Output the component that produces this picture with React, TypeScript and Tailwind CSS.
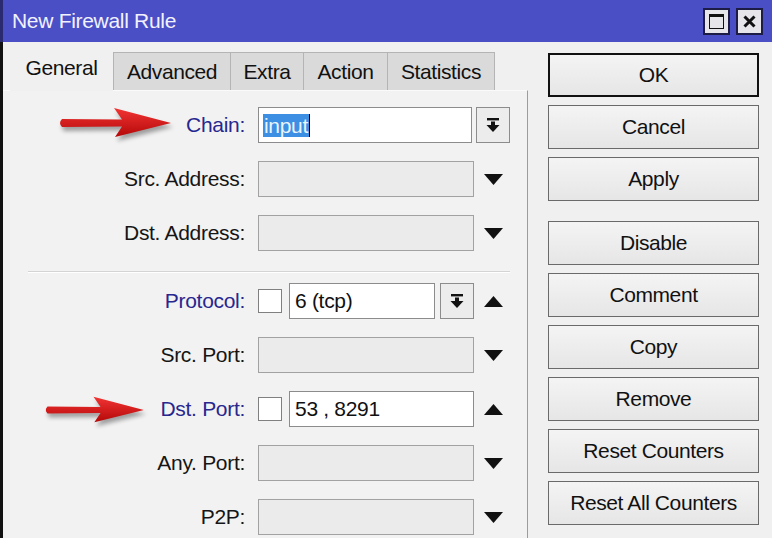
const font = "font-['Liberation_Sans',Arial,sans-serif]";

const DropIcon = () => (
  <svg width="14" height="16" viewBox="0 0 14 16">
    <rect x="1" y="1" width="12" height="2.4" fill="#111" />
    <rect x="5" y="4.5" width="4" height="4" fill="#111" />
    <polygon points="0.5,8 13.5,8 7,15" fill="#111" />
  </svg>
);

const Tri = ({ up }: { up?: boolean }) => (
  <svg width="19" height="11" viewBox="0 0 19 11" className="shrink-0">
    {up ? <polygon points="0,11 19,11 9.5,0" fill="#111" /> : <polygon points="0,0 19,0 9.5,11" fill="#111" />}
  </svg>
);

const Field = ({ w, value, active }: { w: string; value?: string; active?: boolean }) => (
  <div
    className={`${w} h-[36px] shrink-0 flex items-center pl-[5px] text-[21px] tracking-[-0.3px] text-[#111] border ${
      active ? 'bg-white border-[#8c8c8c]' : 'bg-[#ebebeb] border-[#a2a2a2]'
    }`}
  >
    {value}
  </div>
);

const DropBtn = () => (
  <div className="w-[34px] h-[36px] shrink-0 flex items-center justify-center bg-[#ececec] border border-[#8c8c8c]">
    <DropIcon />
  </div>
);

const Check = () => <div className="w-[24px] h-[24px] shrink-0 bg-white border border-[#808080]" />;

const Label = ({ text, blue }: { text: string; blue?: boolean }) => (
  <div className={`w-[243px] shrink-0 text-right pr-[1px] text-[21px] tracking-[-0.3px] ${blue ? 'text-[#27278f]' : 'text-[#151515]'}`}>
    {text}
  </div>
);

const Row = ({ children }: { children: React.ReactNode }) => (
  <div className="h-[36px] flex items-center">{children}</div>
);

const Arrow = ({ className }: { className: string }) => (
  <svg width="120" height="34" viewBox="0 0 120 34" className={`absolute drop-shadow-[2px_4px_2px_rgba(0,0,0,0.35)] ${className}`}>
    <defs>
      <linearGradient id="ar" x1="0" y1="0" x2="0" y2="1">
        <stop offset="0" stopColor="#f23434" />
        <stop offset="1" stopColor="#b40808" />
      </linearGradient>
    </defs>
    <path d="M4 13 Q0 17 4 21 L64 20.5 L57 31 L113 17 L56 2 L64 13.5 Z" fill="url(#ar)" />
  </svg>
);

export default function App() {
  const buttons = ['OK', 'Cancel', 'Apply', 'Disable', 'Comment', 'Copy', 'Remove', 'Reset Counters', 'Reset All Counters'];

  return (
    <div className={`relative w-[772px] h-[538px] overflow-hidden bg-[#f0f0f0] flex flex-col ${font}`}>
      {/* title bar */}
      <div className="h-[42px] shrink-0 bg-[#4b4fc6] flex items-center pl-[12px] pr-[9px] border-l-[3px] border-[#2a2a70]">
        <span className="text-[21px] text-[#f2f2ff] tracking-[-0.3px] -ml-[3px] flex-1">New Firewall Rule</span>
        <div className="flex gap-[6px]">
          <div className="w-[27px] h-[27px] bg-[#e6e6ea] border-2 border-[#1c1c44] flex items-center justify-center">
            <div className="w-[15px] h-[15px] border-[1.5px] border-t-[3px] border-[#111]" />
          </div>
          <div className="w-[27px] h-[27px] bg-[#e6e6ea] border-2 border-[#1c1c44] flex items-center justify-center">
            <svg width="13" height="13" viewBox="0 0 13 13">
              <path d="M1.5 1.5 L11.5 11.5 M11.5 1.5 L1.5 11.5" stroke="#111" strokeWidth="3" />
            </svg>
          </div>
        </div>
      </div>

      <div className="flex-1 flex border-l-[3px] border-[#111]">
        {/* left side: tabs + form */}
        <div className="w-[525px] shrink-0 flex flex-col">
          <div className="h-[48px] flex items-end pl-[7px] text-[21px] tracking-[-0.4px] text-[#111]">
            <div className="w-[103px] h-[42px] bg-[#f0f0f0] flex items-center justify-center pb-[4px] relative top-[1px]">General</div>
            <div className="w-[118px] h-[38px] bg-[#dadada] border border-b-0 border-[#b4b4b4] flex items-center justify-center">Advanced</div>
            <div className="w-[73px] h-[38px] bg-[#dadada] border border-b-0 border-l-0 border-[#b4b4b4] flex items-center justify-center">Extra</div>
            <div className="w-[84px] h-[38px] bg-[#dadada] border border-b-0 border-l-0 border-[#b4b4b4] flex items-center justify-center">Action</div>
            <div className="w-[107px] h-[38px] bg-[#dadada] border border-b-0 border-l-0 border-[#b4b4b4] flex items-center justify-center">Statistics</div>
          </div>

          <div className="flex-1 border-t border-r border-t-[#fafafa] border-r-[#9c9c9c] bg-[#f2f2f2] pt-[16px]">
            <div className="flex flex-col gap-[18px]">
              <Row>
                <Label text="Chain:" blue />
                <div className="ml-[12px] flex gap-[4px]">
                  <div className="w-[214px] h-[36px] bg-white border border-[#8c8c8c] flex items-center pl-[4px] text-[21px] tracking-[-0.3px]">
                    <span className="bg-[#3d8fe3] text-[#eaf4ff] leading-[23px] px-[1px]">input</span>
                    <span className="w-[1px] h-[23px] bg-black" />
                  </div>
                  <DropBtn />
                </div>
              </Row>
              <Row>
                <Label text="Src. Address:" />
                <div className="ml-[12px] flex items-center gap-[10px]">
                  <Field w="w-[216px]" />
                  <Tri />
                </div>
              </Row>
              <Row>
                <Label text="Dst. Address:" />
                <div className="ml-[12px] flex items-center gap-[10px]">
                  <Field w="w-[216px]" />
                  <Tri />
                </div>
              </Row>
            </div>

            <div className="ml-[25px] w-[482px] mt-[20px] mb-[10px] border-t border-b border-t-[#d4d4d4] border-b-white" />

            <div className="flex flex-col gap-[18px]">
              <Row>
                <Label text="Protocol:" blue />
                <div className="ml-[12px] flex items-center">
                  <Check />
                  <div className="ml-[7px]">
                    <Field w="w-[146px]" value="6 (tcp)" active />
                  </div>
                  <div className="ml-[5px]">
                    <DropBtn />
                  </div>
                  <div className="ml-[10px]">
                    <Tri up />
                  </div>
                </div>
              </Row>
              <Row>
                <Label text="Src. Port:" />
                <div className="ml-[12px] flex items-center gap-[10px]">
                  <Field w="w-[216px]" />
                  <Tri />
                </div>
              </Row>
              <Row>
                <Label text="Dst. Port:" blue />
                <div className="ml-[12px] flex items-center">
                  <Check />
                  <div className="ml-[7px]">
                    <Field w="w-[185px]" value="53 , 8291" active />
                  </div>
                  <div className="ml-[10px]">
                    <Tri up />
                  </div>
                </div>
              </Row>
              <Row>
                <Label text="Any. Port:" />
                <div className="ml-[12px] flex items-center gap-[10px]">
                  <Field w="w-[216px]" />
                  <Tri />
                </div>
              </Row>
              <Row>
                <Label text="P2P:" />
                <div className="ml-[12px] flex items-center gap-[10px]">
                  <Field w="w-[216px]" />
                  <Tri />
                </div>
              </Row>
            </div>
          </div>
        </div>

        {/* right side: buttons */}
        <div className="ml-[20px] w-[211px] flex flex-col pt-[11px]">
          {buttons.map((b, i) => (
            <div
              key={b}
              className={`h-[44px] shrink-0 flex items-center justify-center text-[21px] tracking-[-0.4px] text-[#111] bg-gradient-to-b from-[#f4f4f4] to-[#e6e6e6] ${
                i === 0 ? 'border-2 border-[#111]' : 'border-[1.5px] border-[#6a6a6a]'
              } ${i === 3 ? 'mt-[20px]' : i > 0 ? 'mt-[8px]' : ''}`}
            >
              {b}
            </div>
          ))}
        </div>
      </div>

      <Arrow className="left-[58px] top-[106px]" />
      <Arrow className="left-[44px] top-[393px] w-[106px]" />
    </div>
  );
}
